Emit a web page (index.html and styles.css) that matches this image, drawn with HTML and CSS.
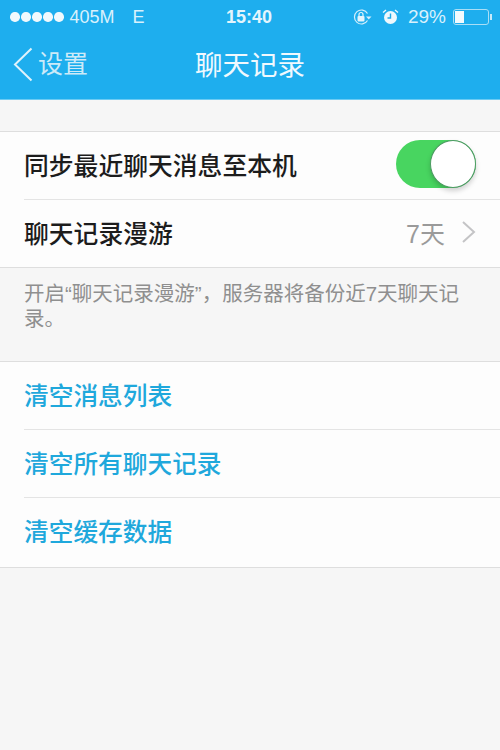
FILE: index.html
```html
<!DOCTYPE html>
<html lang="zh">
<head>
<meta charset="utf-8">
<title>聊天记录</title>
<link rel="stylesheet" href="styles.css">
</head>
<body>
<div class="phone">
  <header class="top">
    <div class="status">
      <div class="status-left">
        <span class="dots"><i></i><i></i><i></i><i></i><i></i></span>
        <span class="carrier">405M</span>
        <span class="net">E</span>
      </div>
      <div class="clock">15:40</div>
      <div class="status-right">
        <svg class="ic" width="20" height="18" viewBox="0 0 20 18"><path d="M15.500 12.500A7 7 0 1 1 15.500 5.500" fill="none" stroke="#d6effb" stroke-width="1.200"/><path d="M14 8.500h5.500l-2.750 3z" fill="#d6effb"/><rect x="5.500" y="8" width="7" height="5.500" rx="1" fill="#e4f4fc"/><path d="M7 8V6.500a2 2 0 0 1 4 0V8" fill="none" stroke="#e4f4fc" stroke-width="1.200"/></svg>
        <svg class="ic alarm" width="17" height="18" viewBox="0 0 17 18"><circle cx="8.500" cy="9.500" r="6.500" fill="#eef8fd"/><path d="M8.500 5.500v4.500H5.500" fill="none" stroke="#1fa9e6" stroke-width="1.400"/><path d="M1 4.500 4 2M16 4.500 13 2" stroke="#eef8fd" stroke-width="1.300"/></svg>
        <span class="pct">29%</span>
        <span class="battery"><span class="level"></span></span><span class="nub"></span>
      </div>
    </div>
    <nav class="nav">
      <div class="back">
        <svg width="20" height="36" viewBox="0 0 20 36"><path d="M18.500 1.500 2 17.500 18.500 33.500" fill="none" stroke="#dff2fb" stroke-width="2"/></svg>
        <span>设置</span>
      </div>
      <h1>聊天记录</h1>
    </nav>
  </header>

  <section class="group first">
    <div class="row">
      <span class="label">同步最近聊天消息至本机</span>
      <span class="switch"><span class="knob"></span></span>
    </div>
    <div class="row">
      <span class="label">聊天记录漫游</span>
      <span class="value">7天
        <svg width="15" height="24" viewBox="0 0 15 24"><path d="M2 2 13 12 2 22" fill="none" stroke="#c4c4c6" stroke-width="2"/></svg>
      </span>
    </div>
  </section>
  <p class="note">开启“聊天记录漫游”，服务器将备份近7天聊天记录。</p>
  <section class="group links">
    <div class="row"><span class="link">清空消息列表</span></div>
    <div class="row"><span class="link">清空所有聊天记录</span></div>
    <div class="row"><span class="link">清空缓存数据</span></div>
  </section>
</div>
</body>
</html>
```
FILE: styles.css
```css
* { box-sizing: border-box; }
html, body { margin: 0; padding: 0; }
body { width: 500px; height: 750px; overflow: hidden; background: #f6f6f6; font-family: "Liberation Sans", "Noto Sans CJK SC", sans-serif; }
.phone { width: 500px; height: 750px; background: #f6f6f6; }
.top { height: 100px; background: #1eaeee; color: #d9f1fc; border-bottom: 1px solid #6ccbf3; }
.status { height: 34px; padding: 0 8px 0 10px; display: flex; align-items: center; justify-content: space-between; font-size: 18px; position: relative; }
.status-left, .status-right { display: flex; align-items: center; }
.dots { display: flex; gap: 1.500px; margin-right: 6px; }
.dots i { width: 9.500px; height: 9.500px; border-radius: 50%; background: #f0f9fd; }
.net { margin-left: 18px; }
.clock { position: absolute; left: 226px; font-weight: bold; color: #e4f5fd; }
.ic { display: block; margin-right: 10px; }
.alarm { margin-right: 9px; }
.pct { font-size: 19px; margin-right: 7px; }
.battery { width: 36px; height: 16px; border: 1px solid #a9def6; border-radius: 3px; padding: 1px; display: block; }
.level { display: block; width: 9px; height: 12px; background: #f2fafe; }
.nub { width: 2px; height: 6px; background: #c6e9f9; display: block; margin-left: 1px; }
.nav { height: 65px; position: relative; display: flex; align-items: center; justify-content: center; }
.nav h1 { margin: 0; font-size: 27.500px; font-weight: 400; color: #f0f9fe; line-height: 1; padding-bottom: 1px; }
.back { position: absolute; left: 13px; top: 13px; display: flex; align-items: center; gap: 5px; font-size: 25px; color: #cdeaf8; line-height: 36px; }
.back span { margin-top: -2px; }
.group { background: #fdfdfd; border-top: 1px solid #dedede; border-bottom: 1px solid #dedede; }
.first { margin-top: 31px; }
.row { height: 68px; margin-left: 24px; padding-right: 24px; display: flex; align-items: center; justify-content: space-between; border-bottom: 1px solid #e4e4e4; }
.row:last-child { height: 67px; border-bottom: 0; }
.links .row, .links .row:last-child { height: 68.200px; }
.label { font-size: 24.800px; font-weight: 500; color: #1c1c1c; margin-bottom: 4px; }
.link { font-size: 24.700px; font-weight: 500; color: #1fa8dc; margin-bottom: 4px; }
.switch { width: 80px; height: 48px; border-radius: 24px; background: #48d560; position: relative; display: block; margin: 0 0 3px 0; }
.knob { position: absolute; right: 0; top: 0; width: 46px; height: 48px; border-radius: 50%; background: #fff; border: 1px solid #4c9a62; box-shadow: 0 3px 5px rgba(0,0,0,.18); }
.value { display: flex; align-items: center; gap: 16px; font-size: 25px; color: #9a9a9a; margin-bottom: 4px; }
.note { margin: 0; height: 93px; padding: 13px 24px 0; font-size: 20.500px; line-height: 25px; color: #8f8f8f; }
```
